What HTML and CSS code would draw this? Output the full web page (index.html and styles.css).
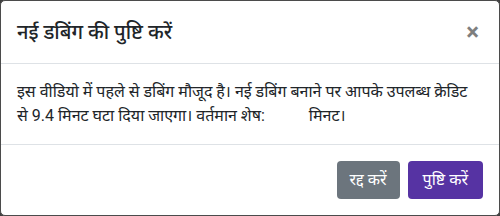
FILE: index.html
```html
<!DOCTYPE html>
<html lang="hi">
<head>
    <meta charset="UTF-8">
    <meta name="viewport" content="width=device-width, initial-scale=1.0">
    <title>डबिंग की पुष्टि</title>
    <link rel="stylesheet" href="styles.css">
</head>
<body>
    <div class="modal-content">
        <div class="modal-header">
            <h5 class="modal-title">नई डबिंग की पुष्टि करें</h5>
            <button type="button" class="close" aria-label="Close">&times;</button>
        </div>

        <div class="modal-body">
            इस वीडियो में पहले से डबिंग मौजूद है। नई डबिंग बनाने पर आपके उपलब्ध क्रेडिट से 9.4 मिनट घटा दिया जाएगा। वर्तमान शेष: <span class="unit">मिनट।</span>
        </div>

        <div class="modal-footer">
            <button type="button" class="btn btn-secondary">रद्द करें</button>
            <button type="button" class="btn btn-primary">पुष्टि करें</button>
        </div>
    </div>
</body>
</html>
```

FILE: styles.css
```css
* {
    box-sizing: border-box;
}
body {
    margin: 0;
    background-color: #3f3f3f;
    font-family: Roboto, "Noto Sans", sans-serif;
    font-size: 16px;
    line-height: 1.5;
    color: #212529;
}
.modal-content {
    width: 500px;
    height: 216px;
    background-color: #fff;
    border: 1px solid #4b4b4b;
    border-radius: 5px;
    display: flex;
    flex-direction: column;
}
.modal-header {
    display: flex;
    align-items: flex-start;
    justify-content: space-between;
    padding: 16px;
    border-bottom: 1px solid #dee2e6;
}
.modal-title {
    margin: 0;
    font-size: 20px;
    font-weight: 500;
    line-height: 1.5;
}
.close {
    padding: 19px 16px 13px;
    margin: -16px -12px -16px auto;
    background: transparent;
    border: 0;
    font-family: Roboto, sans-serif;
    font-size: 24px;
    font-weight: 700;
    line-height: 1;
    color: #000;
    opacity: 0.5;
    cursor: pointer;
}
.modal-body {
    padding: 16px 30px 16px 16px;
    height: 80px;
}
/* the remaining-minutes value renders empty, leaving a gap */
.unit {
    margin-left: 40px;
}
.modal-footer {
    display: flex;
    justify-content: flex-end;
    align-items: center;
    padding: 12px;
    border-top: 1px solid #dee2e6;
}
.btn {
    margin: 4px;
    height: 38px;
    padding: 6px 12px;
    border: 1px solid transparent;
    border-radius: 4px;
    font-family: Roboto, "Noto Sans", sans-serif;
    font-size: 16px;
    line-height: 1.5;
    color: #fff;
    cursor: pointer;
}
.btn-secondary {
    background-color: #6c757d;
}
.btn-primary {
    padding: 6px 14px;
    background-color: #5633a3;
}
```
